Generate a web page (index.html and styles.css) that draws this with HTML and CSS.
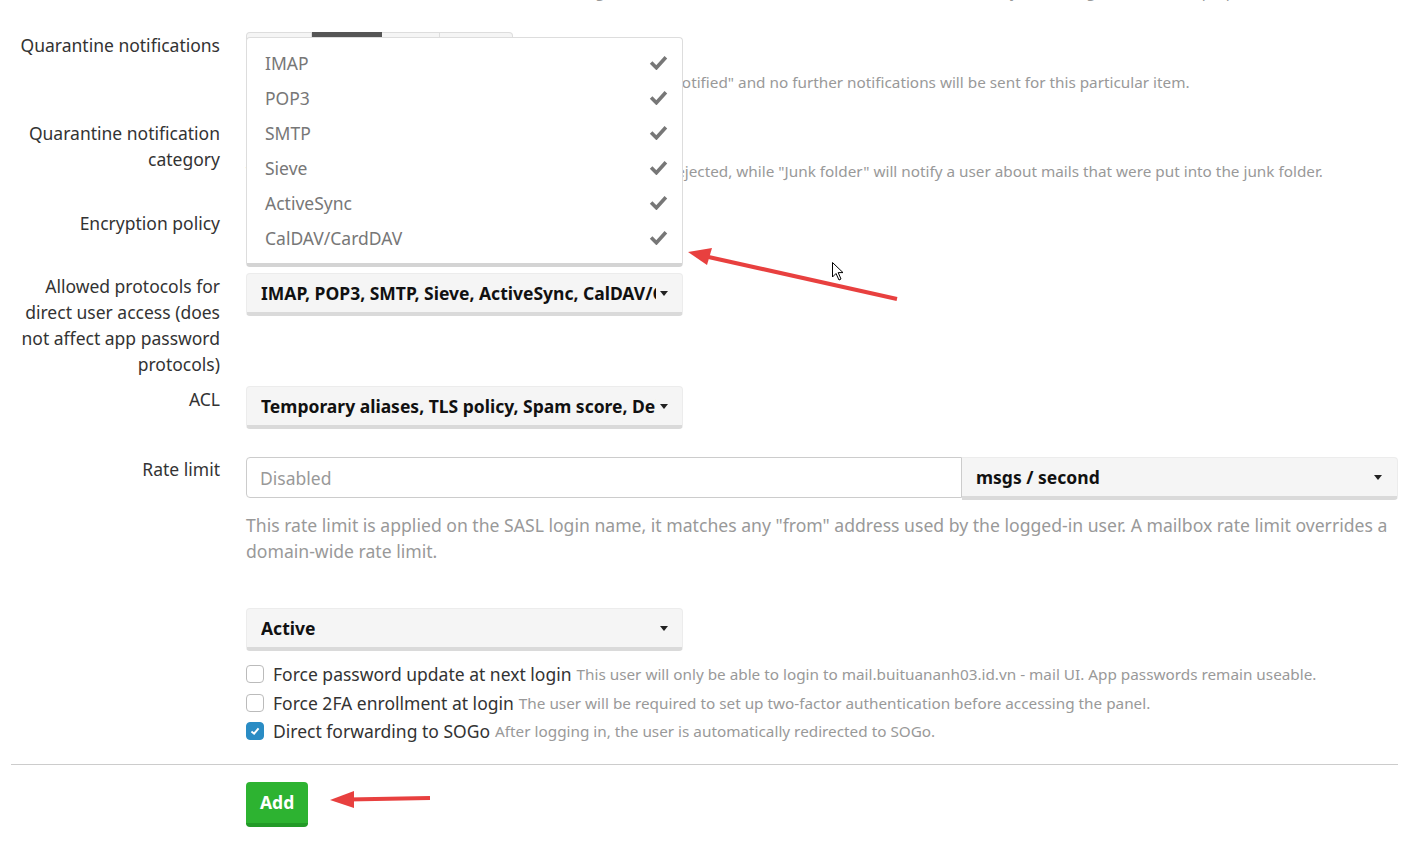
FILE: index.html
```html
<!DOCTYPE html>
<html lang="en">
<head>
  <meta charset="UTF-8" />
  <title>Add mailbox</title>
  <link rel="stylesheet" href="styles.css">
</head>
<body>
  <div class="page">

    <!-- tail of the previous help text, scrolled out of view -->
    <div class="form-row row-cut">
      <div class="col-label"></div>
      <div class="col-control">
        <p class="help">In subfolder: a new subfolder named after the tag will be created below INBOX ("INBOX/Facebook"). In subject: the tags name will be prepended.</p>
      </div>
    </div>

    <!-- quarantine notifications -->
    <div class="form-row row-qn">
      <label class="col-label">Quarantine notifications</label>
      <div class="col-control">
        <div class="btn-group">
          <button class="btn">Never</button><button class="btn active">Hourly</button><button class="btn">Daily</button><button class="btn">Weekly</button>
        </div>
        <p class="help">Once a notification has been sent, items will be marked as "notified" and no further notifications will be sent for this particular item.</p>
      </div>
    </div>

    <!-- quarantine category -->
    <div class="form-row row-qc">
      <label class="col-label">Quarantine notification category</label>
      <div class="col-control">
        <div class="btn-group">
          <button class="btn active">Rejected</button><button class="btn">Junk folder</button><button class="btn">All categories</button>
        </div>
        <p class="help">The notification category "Rejected" includes mail that was rejected, while "Junk folder" will notify a user about mails that were put into the junk folder.</p>
      </div>
    </div>

    <!-- encryption -->
    <div class="form-row row-enc">
      <label class="col-label">Encryption policy</label>
      <div class="col-control">
        <div class="form-select">Enforce TLS incoming</div>
      </div>
    </div>

    <!-- protocols, menu is open -->
    <div class="form-row row-proto">
      <label class="col-label">Allowed protocols for direct user access (does not affect app password protocols)</label>
      <div class="col-control">
        <div class="dropdown">
          <div class="dropdown-menu">
            <div class="dropdown-item"><span>IMAP</span><svg class="tick" viewBox="0 0 18 14"><polyline points="2,7 7,12 16,2"/></svg></div>
            <div class="dropdown-item"><span>POP3</span><svg class="tick" viewBox="0 0 18 14"><polyline points="2,7 7,12 16,2"/></svg></div>
            <div class="dropdown-item"><span>SMTP</span><svg class="tick" viewBox="0 0 18 14"><polyline points="2,7 7,12 16,2"/></svg></div>
            <div class="dropdown-item"><span>Sieve</span><svg class="tick" viewBox="0 0 18 14"><polyline points="2,7 7,12 16,2"/></svg></div>
            <div class="dropdown-item"><span>ActiveSync</span><svg class="tick" viewBox="0 0 18 14"><polyline points="2,7 7,12 16,2"/></svg></div>
            <div class="dropdown-item"><span>CalDAV/CardDAV</span><svg class="tick" viewBox="0 0 18 14"><polyline points="2,7 7,12 16,2"/></svg></div>
          </div>
          <div class="select-btn"><span class="select-text">IMAP, POP3, SMTP, Sieve, ActiveSync, CalDAV/CardDAV</span><span class="caret"></span></div>
        </div>
      </div>
    </div>

    <!-- acl -->
    <div class="form-row row-acl">
      <label class="col-label">ACL</label>
      <div class="col-control">
        <div class="select-btn"><span class="select-text">Temporary aliases, TLS policy, Spam score, Delimiter action</span><span class="caret"></span></div>
      </div>
    </div>

    <!-- rate limit -->
    <div class="form-row row-rate">
      <label class="col-label">Rate limit</label>
      <div class="col-control">
        <div class="rate-group">
          <input class="rate-input" type="text" placeholder="Disabled">
          <div class="select-btn rate-select"><span class="select-text">msgs / second</span><span class="caret"></span></div>
        </div>
        <p class="help help-big">This rate limit is applied on the SASL login name, it matches any "from" address used by the logged-in user. A mailbox rate limit overrides a domain-wide rate limit.</p>
      </div>
    </div>

    <!-- status + options -->
    <div class="form-row row-status">
      <div class="col-label"></div>
      <div class="col-control">
        <div class="select-btn"><span class="select-text">Active</span><span class="caret"></span></div>
        <div class="checks">
          <div class="check-row"><span class="check"></span>Force password update at next login <small>This user will only be able to login to mail.buituananh03.id.vn - mail UI. App passwords remain useable.</small></div>
          <div class="check-row"><span class="check"></span>Force 2FA enrollment at login <small>The user will be required to set up two-factor authentication before accessing the panel.</small></div>
          <div class="check-row"><span class="check checked"><svg viewBox="0 0 18 18"><polyline points="5,9.5 8,12 13,6"/></svg></span>Direct forwarding to SOGo <small>After logging in, the user is automatically redirected to SOGo.</small></div>
        </div>
      </div>
    </div>

    <hr class="divider">

    <div class="form-row">
      <div class="col-label"></div>
      <div class="col-control">
        <button class="btn-add">Add</button>
      </div>
    </div>

    <!-- red annotation arrows + mouse pointer on top of the screenshot -->
    <svg class="annotations" viewBox="0 0 1402 841">
      <line x1="897" y1="299" x2="704" y2="256" />
      <polygon points="688,252 712,248 707,265" />
      <line x1="430" y1="798" x2="348" y2="799.5" />
      <polygon points="330,800 354,791 354,808" />
      <path class="pointer" d="M832.5 262.5 L832.5 277 L836 273.5 L839 280 L841 279 L838.2 272.6 L843 272.6 Z" />
    </svg>
  </div>
</body>
</html>
```

FILE: styles.css
```css
body {
  margin: 0;
  font-family: "Noto Sans", "DejaVu Sans", sans-serif;
  font-size: 17.5px;
  line-height: 26px;
  color: #333;
  background: #fff;
}

.page {
  display: flow-root;
  position: relative;
  padding: 0 4px 0 11px;
  height: 841px;
  overflow: hidden;
}

/* one label + control line */
.form-row {
  display: grid;
  grid-template-columns: 235px 1fr;
  margin-bottom: 27px;
}

.col-label {
  text-align: right;
  padding-right: 26px;
}

.col-control {
  position: relative;
}

.row-cut { margin-top: -19px; margin-bottom: 31px; }
.row-qn { margin-bottom: 28px; }
.row-qc { margin-bottom: 29px; }
.row-enc { margin-bottom: 25px; }
.row-proto { margin-bottom: 9px; }
.row-acl { margin-bottom: 27px; }
.row-rate { margin-bottom: 44px; }
.row-status { margin-bottom: 0; }

/* help texts */
.help {
  margin: 2px 0 0;
  font-size: 15.3px;
  line-height: 20px;
  color: #999;
  white-space: nowrap;
}
.row-qc .help { margin-top: 3px; }
.row-cut .help { margin: 0; }

.help-big {
  margin-top: 12px;
  font-size: 17.6px;
  line-height: 26px;
  white-space: normal;
}

/* button groups */
.btn-group {
  display: inline-flex;
  height: 38px;
}
.btn {
  font-family: inherit;
  font-size: 15px;
  padding: 0 11px;
  background: #f5f5f5;
  color: #333;
  border: 1px solid #ddd;
  border-left: none;
  border-bottom: 3px solid #ddd;
}
.btn:first-child {
  border-left: 1px solid #ddd;
  border-radius: 4px 0 0 4px;
}
.btn:last-child { border-radius: 0 4px 4px 0; }
.btn.active {
  background: #555;
  border-color: #555;
  color: #fff;
}

.form-select {
  box-sizing: border-box;
  width: 437px;
  height: 38px;
  padding: 0 12px;
  line-height: 36px;
  border: 1px solid #ccc;
  border-radius: 4px;
}

/* bootstrap-select style buttons */
.select-btn {
  box-sizing: border-box;
  display: flex;
  align-items: center;
  width: 437px;
  height: 43px;
  padding: 0 14px;
  background: #f5f5f5;
  border: 1px solid #ececec;
  border-bottom: 4px solid #dadada;
  border-radius: 4px;
  font-weight: bold;
  color: #111;
}
.select-text {
  flex: 1;
  overflow: hidden;
  white-space: nowrap;
}
.caret {
  width: 0;
  height: 0;
  margin-left: 4px;
  border-top: 5px solid #222;
  border-left: 4px solid transparent;
  border-right: 4px solid transparent;
}

.dropdown { position: relative; }

.dropdown-menu {
  position: absolute;
  left: 0;
  bottom: 100%;
  margin-bottom: 6px;
  box-sizing: border-box;
  width: 437px;
  padding: 7px 0 8px;
  background: #fff;
  border: 1px solid #ddd;
  border-bottom: 4px solid #d4d4d4;
  border-radius: 4px;
  z-index: 10;
}
.dropdown-item {
  display: flex;
  align-items: center;
  justify-content: space-between;
  height: 35px;
  padding: 0 14px 0 18px;
  color: #777;
}
.tick {
  width: 19px;
  height: 15px;
  fill: none;
  stroke: #777;
  stroke-width: 3.4;
}

/* rate limit */
.rate-group { display: flex; margin-top: 1px; }
.rate-input {
  box-sizing: border-box;
  width: 716px;
  height: 41px;
  padding: 0 13px;
  font-family: inherit;
  font-size: 17.5px;
  border: 1px solid #ccc;
  border-radius: 4px 0 0 4px;
}
.rate-input::placeholder { color: #999; }
.rate-select {
  flex: 1;
  width: auto;
  height: 43px;
  border-radius: 0 4px 4px 0;
  border-left: none;
  padding-right: 15px;
}

/* checkboxes */
.checks { margin-top: 9px; }
.check-row {
  display: flex;
  align-items: center;
  line-height: 28.5px;
  white-space: nowrap;
}
.check-row small {
  font-size: 15.3px;
  color: #999;
  margin-left: 5px;
}
.check {
  box-sizing: border-box;
  width: 18px;
  height: 18px;
  margin-right: 9px;
  border: 1px solid #bbb;
  border-radius: 4px;
  background: #fff;
}
.check.checked {
  background: #2a8cc4;
  border-color: #2a8cc4;
}
.check svg {
  display: block;
  width: 16px;
  height: 16px;
  fill: none;
  stroke: #fff;
  stroke-width: 2.2;
}

.divider {
  margin: 18px 0 17px;
  border: none;
  border-top: 1px solid #ccc;
}

.btn-add {
  height: 45px;
  padding: 0 14px;
  font-family: inherit;
  font-size: 17.5px;
  font-weight: bold;
  color: #fff;
  background: #2db331;
  border: none;
  border-bottom: 4px solid #229a27;
  border-radius: 4px;
}

/* screenshot annotations */
.annotations {
  position: absolute;
  top: 0;
  left: 0;
  width: 1402px;
  height: 841px;
  pointer-events: none;
  z-index: 20;
}
.annotations line {
  stroke: #e8403f;
  stroke-width: 4;
}
.annotations polygon { fill: #e8403f; }
.annotations .pointer {
  fill: #fff;
  stroke: #000;
  stroke-width: 1;
}
```
